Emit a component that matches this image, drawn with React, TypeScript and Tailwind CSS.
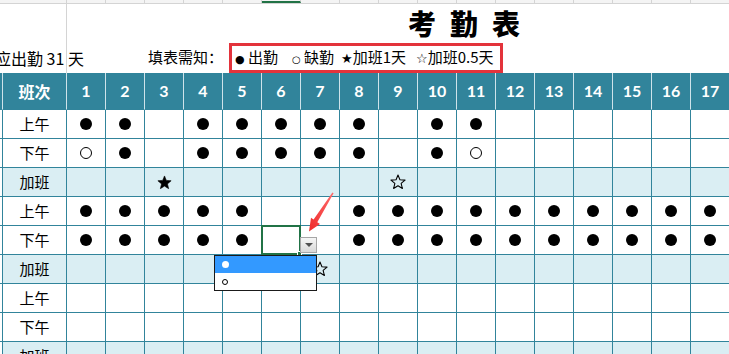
import { ReactNode } from 'react';

const GRID = 'grid grid-cols-[3px_64px_repeat(17,39px)]';
const CJK = "font-['Noto_Sans_CJK_SC',sans-serif]";

const days = Array.from({ length: 17 }, (_, i) => i + 1);

// one string per row, a character per day
const rows: { label: string; extra?: boolean; marks: string }[] = [
  { label: '上午', marks: '●●.●●●●●.●●......' },
  { label: '下午', marks: '○●.●●●●●.●○......' },
  { label: '加班', extra: true, marks: '..★.....☆........' },
  { label: '上午', marks: '●●●●●..●●●●●●●●●●' },
  { label: '下午', marks: '●●●●●..●●●●●●●●●●' },
  { label: '加班', extra: true, marks: '......☆..........' },
  { label: '上午', marks: '.................' },
  { label: '下午', marks: '.................' },
  { label: '加班', extra: true, marks: '.................' },
];

function Star({ filled, size }: { filled: boolean; size: number }) {
  return (
    <svg width={size} height={size} viewBox="0 0 24 24">
      <polygon
        points="12,1.5 14.9,8.6 22.6,9.2 16.7,14.2 18.6,21.8 12,17.7 5.4,21.8 7.3,14.2 1.4,9.2 9.1,8.6"
        fill={filled ? '#000' : 'none'}
        stroke="#000"
        strokeWidth={filled ? 1 : 1.6}
        strokeLinejoin="round"
      />
    </svg>
  );
}

function Mark({ m }: { m: string }) {
  if (m === '●') return <span className="block h-3 w-3 rounded-full bg-black" />;
  if (m === '○') return <span className="block h-3 w-3 rounded-full border border-black" />;
  if (m === '★') return <Star filled size={15} />;
  if (m === '☆') return <Star filled={false} size={16} />;
  return null;
}

function Dropdown() {
  return (
    <>
      <div className="absolute inset-[-1px] z-10 border-2 border-[#217346]">
        <span className="absolute bottom-[-3px] right-[-3px] h-[5px] w-[5px] border border-white bg-[#217346]" />
      </div>
      <div className="absolute left-[38px] top-[11px] z-20 flex h-[16px] w-[17px] items-center justify-center border border-[#a6a6a6] bg-gradient-to-b from-[#f6f6f6] to-[#d9d9d9]">
        <span className="h-0 w-0 border-x-[4px] border-t-[4px] border-x-transparent border-t-[#505050]" />
      </div>
      <div className="absolute left-[-48px] top-[29px] z-20 flex h-[36px] w-[103px] flex-col border border-[#1a1a1a] bg-white">
        <div className="flex h-[17px] items-center bg-[#3399ff] pl-[7px]">
          <span className="block h-[7px] w-[7px] rounded-full bg-white" />
        </div>
        <div className="flex h-[17px] items-center pl-[7px]">
          <span className="block h-[6px] w-[6px] rounded-full border border-black" />
        </div>
      </div>
    </>
  );
}

function Cell({ children, className = '' }: { children?: ReactNode; className?: string }) {
  return (
    <div className={`relative flex items-center justify-center border-b border-r border-[#31849b] ${className}`}>
      {children}
    </div>
  );
}

export default function App() {
  return (
    <div className={`relative h-[354px] w-[729px] overflow-hidden bg-white text-black ${CJK}`}>
      {/* sheet column headings, mostly scrolled away */}
      <div className={`${GRID} h-[4px] border-b border-[#d4d4d4] bg-[#f4f4f4]`}>
        <div />
        {Array.from({ length: 18 }, (_, i) => (
          <div
            key={i}
            className={`border-r border-[#d4d4d4] ${i === 6 ? 'border-b-2 border-b-[#217346]' : ''}`}
          />
        ))}
      </div>

      <div className="grid h-[69px] grid-cols-[67px_1fr] grid-rows-[38px_31px]">
        <div className="row-span-2 flex flex-col border-r border-[#d4d4d4]">
          <div className="h-[38px]" />
          <div className="flex h-[31px] items-center whitespace-nowrap text-[16px]">
            <span className="ml-[-5px]">应出勤 31 天</span>
          </div>
        </div>
        <div className="flex items-center pl-[341px]">
          <h1 className="text-[28px] font-black leading-none tracking-[14px]">考勤表</h1>
        </div>
        <div className="flex items-center whitespace-nowrap pl-[81px] text-[15px]">
          <span className="w-[81px]">填表需知：</span>
          <div className="flex h-[30px] w-[274px] items-center border-[3px] border-[#e3333b] pl-[3px]">
            <span className="w-[57px]">
              <span className="font-['DejaVu_Sans'] text-[11px]">●</span> 出勤
            </span>
            <span className="w-[49px]">
              <span className="font-['DejaVu_Sans'] text-[10px]">○</span> 缺勤
            </span>
            <span className="w-[75px]">
              <span className="font-['DejaVu_Sans'] text-[13px]">★</span>加班1天
            </span>
            <span>
              <span className="font-['DejaVu_Sans'] text-[13px]">☆</span>加班0.5天
            </span>
          </div>
        </div>
      </div>

      {/* header row */}
      <div className={`${GRID} h-[37px] bg-[#31849b] text-white`}>
        <div className="border-r border-b border-r-[#cfe3ea] border-b-[#31849b]" />
        <div className="flex items-center justify-center border-r border-b border-r-[#cfe3ea] border-b-[#31849b] text-[16px] font-bold">
          班次
        </div>
        {days.map((d) => (
          <div
            key={d}
            className="flex items-center justify-center border-r border-b border-r-[#cfe3ea] border-b-[#31849b] font-['Lato',sans-serif] text-[16px] font-bold"
          >
            {d}
          </div>
        ))}
      </div>

      {rows.map((row, r) => (
        <div key={r} className={`${GRID} h-[29px] ${row.extra ? 'bg-[#daeef3]' : 'bg-white'}`}>
          <div className="border-r border-b border-[#31849b] bg-white" />
          <Cell className="text-[15px]">{row.label}</Cell>
          {days.map((d) => (
            <Cell key={d}>
              <Mark m={row.marks[d - 1]} />
              {r === 4 && d === 6 && <Dropdown />}
            </Cell>
          ))}
        </div>
      ))}

      {/* red callout arrow */}
      <svg className="absolute left-[300px] top-[190px] z-30" width="40" height="45" viewBox="0 0 40 45">
        <defs>
          <linearGradient id="arrow" x1="1" y1="0" x2="0" y2="1">
            <stop offset="0" stopColor="#ff6b6b" />
            <stop offset="1" stopColor="#ee2a2a" />
          </linearGradient>
        </defs>
        <polygon
          points="33.6,3.2 17.3,32.2 20,34 9,41.5 11,27.8 13.6,29.6 32.4,2.6"
          fill="url(#arrow)"
        />
      </svg>
    </div>
  );
}
